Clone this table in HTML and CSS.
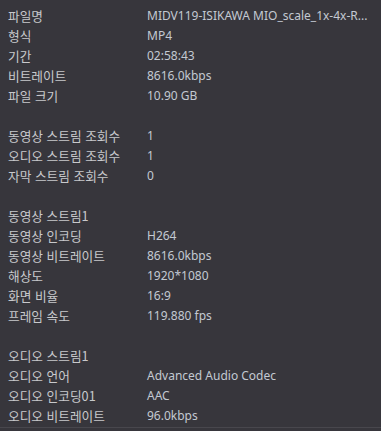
FILE: index.html
```html
<!DOCTYPE html>
<html lang="ko">
<head>
<meta charset="utf-8">
<link rel="stylesheet" href="styles.css">
</head>
<body>
<div class="panel">
  <div class="row"><span class="k">파일명</span><span class="v">MIDV119-ISIKAWA MIO_scale_1x-4x-R...</span></div>
  <div class="row"><span class="k">형식</span><span class="v">MP4</span></div>
  <div class="row"><span class="k">기간</span><span class="v">02:58:43</span></div>
  <div class="row"><span class="k">비트레이트</span><span class="v">8616.0kbps</span></div>
  <div class="row"><span class="k">파일 크기</span><span class="v">10.90 GB</span></div>
  <div class="row"></div>
  <div class="row"><span class="k">동영상 스트림 조회수</span><span class="v">1</span></div>
  <div class="row"><span class="k">오디오 스트림 조회수</span><span class="v">1</span></div>
  <div class="row"><span class="k">자막 스트림 조회수</span><span class="v">0</span></div>
  <div class="row"></div>
  <div class="row"><span class="k">동영상 스트림1</span></div>
  <div class="row"><span class="k">동영상 인코딩</span><span class="v">H264</span></div>
  <div class="row"><span class="k">동영상 비트레이트</span><span class="v">8616.0kbps</span></div>
  <div class="row"><span class="k">해상도</span><span class="v">1920*1080</span></div>
  <div class="row"><span class="k">화면 비율</span><span class="v">16:9</span></div>
  <div class="row"><span class="k">프레임 속도</span><span class="v">119.880 fps</span></div>
  <div class="row"></div>
  <div class="row"><span class="k">오디오 스트림1</span></div>
  <div class="row"><span class="k">오디오 언어</span><span class="v">Advanced Audio Codec</span></div>
  <div class="row"><span class="k">오디오 인코딩01</span><span class="v">AAC</span></div>
  <div class="row"><span class="k">오디오 비트레이트</span><span class="v">96.0kbps</span></div>
</div>
<div class="divider"></div>
</body>
</html>
```

FILE: styles.css
```css
html, body {
  margin: 0;
  padding: 0;
  background: #37363c;
  width: 381px;
  height: 431px;
  overflow: hidden;
}
body {
  font-family: "Noto Sans", "Noto Sans CJK KR", sans-serif;
  font-size: 12px;
  color: #c9cbd0;
}
.panel {
  padding: 5px 0 0 8px;
  height: 422px;
  box-sizing: border-box;
}
.row {
  display: grid;
  grid-template-columns: 139px 1fr;
  height: 20px;
  align-items: center;
  white-space: nowrap;
}
.k {
  font-family: "Noto Sans CJK KR", sans-serif;
  font-size: 12.7px;
  color: #c8c9cc;
}
.v {
  color: #c3c9d2;
}
.divider {
  height: 1px;
  background: #48474d;
  margin-top: 5px;
}
```
